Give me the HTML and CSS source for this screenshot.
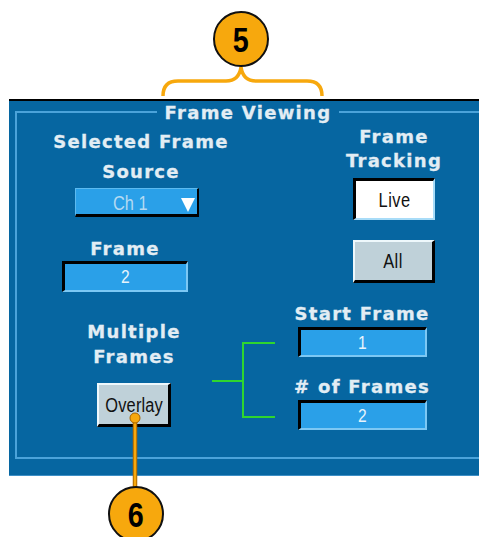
FILE: index.html
```html
<!DOCTYPE html>
<html lang="en">

<head>
    <meta charset="UTF-8">
    <meta name="viewport" content="width=device-width, initial-scale=1.0">
    <title>Frame Viewing</title>
    <link rel="stylesheet" href="styles.css">
</head>

<body>
    <div class="figure">
        <div class="panel">
            <div class="group">
                <div class="group-title">Frame Viewing</div>

                <div class="top-row">
                    <div class="col-source">
                        <div class="label label-source">Selected Frame<br>Source</div>
                        <div class="select">
                            <span class="narrow">Ch 1</span>
                            <span class="arrow"></span>
                        </div>
                        <div class="label frame-label">Frame</div>
                        <div class="field frame-field"><span class="narrow">2</span></div>
                    </div>
                    <div class="col-tracking">
                        <div class="label label-tracking">Frame<br>Tracking</div>
                        <div class="btn btn-pressed"><span class="narrow">Live</span></div>
                        <div class="btn btn-all"><span class="narrow">All</span></div>
                    </div>
                </div>

                <div class="bottom-row">
                    <div class="col-multi">
                        <div class="label label-multi">Multiple<br>Frames</div>
                        <div class="btn btn-overlay"><span class="narrow">Overlay</span></div>
                    </div>
                    <!-- green link between the mode button and its two fields -->
                    <svg class="link" viewBox="0 0 65 78" width="65" height="78">
                        <path d="M1 40H32M32 1V77M32 2H64M32 76H64" stroke="#2fd62f" stroke-width="2" fill="none"></path>
                    </svg>
                    <div class="col-range">
                        <div class="label">Start Frame</div>
                        <div class="field range-field"><span class="narrow">1</span></div>
                        <div class="label range-label">#&nbsp;of Frames</div>
                        <div class="field range-field"><span class="narrow">2</span></div>
                    </div>
                </div>
            </div>
        </div>

        <!-- callouts drawn over the screenshot -->
        <svg class="callouts" viewBox="0 0 479 537" width="479" height="537">
            <path d="M163 96Q163 81 178 81H226Q239 81 241 67Q243 81 256 81H307Q322 81 322 96" stroke="#f7a80d" stroke-width="3.5" fill="none"></path>
            <path d="M135 418V492" stroke="#a86400" stroke-width="4.5"></path>
            <path d="M135 418V492" stroke="#f7a80d" stroke-width="2.5"></path>
            <circle cx="135" cy="418" r="5" fill="#f7a80d" stroke="#a86400" stroke-width="1"></circle>
        </svg>
        <div class="badge badge-top"><span class="narrow">5</span></div>
        <div class="badge badge-bottom"><span class="narrow">6</span></div>
    </div>
</body>

</html>
```

FILE: styles.css
```css
* {
    margin: 0;
    padding: 0;
    box-sizing: border-box;
}

body {
    background: #ffffff;
    font-family: 'DejaVu Sans', sans-serif;
}

.figure {
    position: relative;
    width: 479px;
    height: 537px;
    padding-top: 99px;
    overflow: hidden;
}

/* scope panel */
.panel {
    margin-left: 9px;
    background: #0666a1;
    border-top: 2px solid #000;
    border-bottom: 1px solid #3d8fc6;
    padding: 10px 0 16px 6px;
}

.group {
    border: 2px solid #4ba3da;
    border-right: none;
    padding-bottom: 27px;
}

.group-title,
.label {
    font-weight: bold;
    font-size: 18px;
    line-height: 20px;
    letter-spacing: 1.3px;
    color: #e2edf4;
    text-align: center;
    -webkit-text-stroke: 0.3px #e2edf4;
}

.group-title {
    width: fit-content;
    margin: -10px auto 0;
    padding: 0 8px;
    background: #0666a1;
}

.top-row {
    display: flex;
    margin-top: 2px;
}

.col-source,
.col-tracking,
.col-multi,
.col-range {
    display: flex;
    flex-direction: column;
    align-items: center;
}

.col-source {
    width: 248px;
    padding-top: 2px;
}

.label-source {
    line-height: 30px;
}

.col-tracking {
    width: 170px;
    margin-left: 44px;
}

.label-tracking {
    line-height: 24px;
}

.bottom-row {
    display: flex;
    align-items: flex-start;
    margin-top: 12px;
}

.col-multi {
    width: 100px;
    margin-left: 67px;
    padding-top: 15px;
}

.label-multi {
    line-height: 25px;
}

.link {
    display: block;
    margin: 37px 0 0 27px;
}

.col-range {
    width: 140px;
    margin-left: 16px;
}

.range-label {
    margin-top: 20px;
}

/* controls: the scope uses a condensed face, so Arial metrics are squeezed */
.select,
.field,
.btn {
    font-family: 'Liberation Sans', Arial, sans-serif;
    font-size: 20px;
}

.narrow {
    display: inline-block;
    transform: scaleX(0.82);
}

.select {
    display: flex;
    justify-content: space-between;
    width: 124px;
    height: 29px;
    margin: 1px 8px 0 0;
    padding: 4px 2px 0 37px;
    line-height: 21px;
    color: #b4daf2;
    background: #2aa0e8;
    border-top: 1px solid #5cbaf0;
    border-left: 1px solid #5cbaf0;
    border-right: 2px solid #000;
    border-bottom: 3px solid #000;
}

.select .narrow {
    transform-origin: left center;
}

.arrow {
    width: 0;
    height: 0;
    margin-top: 5px;
    border-left: 7.5px solid transparent;
    border-right: 7.5px solid transparent;
    border-top: 14px solid #fff;
}

.field {
    text-align: center;
    font-size: 19px;
    color: #e6f4fc;
    background: #2aa0e8;
    border-top: 3px solid #000;
    border-left: 3px solid #000;
    border-right: 2px solid #7cc8f4;
    border-bottom: 2px solid #7cc8f4;
}

.frame-label {
    margin: 22px 32px 0 0;
}

.frame-field {
    width: 126px;
    height: 31px;
    margin: 2px 32px 0 0;
    line-height: 26px;
}

.range-field {
    width: 129px;
    height: 30px;
    margin-top: 3px;
    line-height: 25px;
}

.btn {
    width: 82px;
    height: 42px;
    text-align: center;
    line-height: 38px;
    letter-spacing: 0.6px;
    color: #111;
    background: #bfd1d9;
    border-top: 2px solid #eef8fc;
    border-left: 2px solid #eef8fc;
    border-right: 3px solid #000;
    border-bottom: 3px solid #000;
}

.btn-pressed {
    margin-top: 5px;
    background: #fff;
    border-top: 3px solid #000;
    border-left: 3px solid #000;
    border-right: 2px solid #a8dcf8;
    border-bottom: 2px solid #a8dcf8;
}

.btn-all {
    height: 43px;
    margin-top: 20px;
}

.btn-overlay {
    width: 74px;
    height: 44px;
    margin-top: 14px;
    line-height: 40px;
    letter-spacing: 0.2px;
}

/* callouts */
.callouts {
    position: absolute;
    top: 0;
    left: 0;
    pointer-events: none;
}

.badge {
    position: absolute;
    width: 56px;
    height: 56px;
    display: flex;
    align-items: center;
    justify-content: center;
    border: 2px solid #111;
    border-radius: 50%;
    background: #f7a80d;
    font-family: 'Liberation Sans', Arial, sans-serif;
    font-weight: bold;
    font-size: 35px;
    line-height: 1;
    color: #000;
}

.badge-top {
    left: 213px;
    top: 11px;
}

.badge-bottom {
    left: 108px;
    top: 486px;
}
```
